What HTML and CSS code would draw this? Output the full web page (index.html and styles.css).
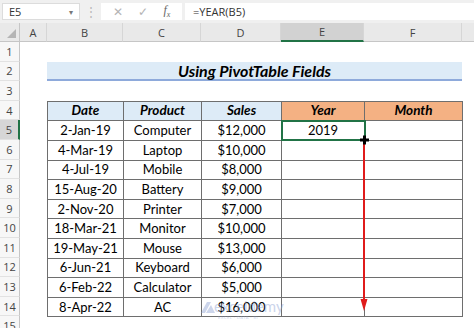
FILE: index.html
```html
<!DOCTYPE html>
<html lang="en">
  <head>
    <meta charset="UTF-8" />
    <title>Using PivotTable Fields</title>
    <link rel="stylesheet" href="styles.css">
  </head>
  <body>
    <div class="topbar">
      <div class="namebox"><span>E5</span><span class="caret">&#9662;</span></div>
      <div class="grip">&#8942;</div>
      <div class="fxbox">
        <span class="cancel">&#10005;</span>
        <span class="enter">&#10003;</span>
        <span class="fx">f<sub>x</sub></span>
      </div>
      <div class="formula">=YEAR(B5)</div>
    </div>

    <div class="sheet">
      <div class="colhead corner"></div>
      <div class="colhead">A</div>
      <div class="colhead">B</div>
      <div class="colhead">C</div>
      <div class="colhead">D</div>
      <div class="colhead active">E</div>
      <div class="colhead">F</div>
      <div class="colhead last"></div>

      <div class="rowhead">1</div>
      <div class="rowhead">2</div>
      <div class="rowhead">3</div>
      <div class="rowhead">4</div>
      <div class="rowhead active">5</div>
      <div class="rowhead">6</div>
      <div class="rowhead">7</div>
      <div class="rowhead">8</div>
      <div class="rowhead">9</div>
      <div class="rowhead">10</div>
      <div class="rowhead">11</div>
      <div class="rowhead">12</div>
      <div class="rowhead">13</div>
      <div class="rowhead">14</div>
      <div class="rowhead">15</div>

      <div class="title">Using PivotTable Fields</div>

      <table class="data">
        <colgroup>
          <col class="c-date"><col class="c-prod"><col class="c-sales"><col class="c-year"><col class="c-month">
        </colgroup>
        <tr>
          <th class="blue">Date</th>
          <th class="blue">Product</th>
          <th class="blue">Sales</th>
          <th class="orange">Year</th>
          <th class="orange">Month</th>
        </tr>
        <tr><td>2-Jan-19</td><td>Computer</td><td>$12,000</td><td class="sel">2019</td><td></td></tr>
        <tr><td>4-Mar-19</td><td>Laptop</td><td>$10,000</td><td></td><td></td></tr>
        <tr><td>4-Jul-19</td><td>Mobile</td><td>$8,000</td><td></td><td></td></tr>
        <tr><td>15-Aug-20</td><td>Battery</td><td>$9,000</td><td></td><td></td></tr>
        <tr><td>2-Nov-20</td><td>Printer</td><td>$7,000</td><td></td><td></td></tr>
        <tr><td>18-Mar-21</td><td>Monitor</td><td>$10,000</td><td></td><td></td></tr>
        <tr><td>19-May-21</td><td>Mouse</td><td>$13,000</td><td></td><td></td></tr>
        <tr><td>6-Jun-21</td><td>Keyboard</td><td>$6,000</td><td></td><td></td></tr>
        <tr><td>6-Feb-22</td><td>Calculator</td><td>$5,000</td><td></td><td></td></tr>
        <tr><td>8-Apr-22</td><td>AC</td><td>$16,000</td><td></td><td></td></tr>
      </table>
    </div>

    <!-- fill handle, drag arrow and watermark sit over the grid -->
    <svg class="marks" width="474" height="328" viewBox="0 0 474 328">
      <g class="logo">
        <polygon points="201,313 207,302 211,302 205,313" />
        <polygon points="206,313 211,305 215,313" />
        <text x="214" y="312" class="wm">exceldemy</text>
        <text x="218" y="319" class="wm-small">EXCEL · DATA · BI</text>
      </g>
      <line x1="364" y1="143" x2="364" y2="301" class="arrow" />
      <polygon points="360.5,299 367.5,299 364,311" class="arrowhead" />
      <rect x="360" y="138.5" width="9" height="3" />
      <rect x="363" y="135.5" width="3" height="9" />
    </svg>
  </body>
</html>
```

FILE: styles.css
```css
* {
  margin: 0;
  padding: 0;
  box-sizing: border-box;
}

body {
  position: relative;
  width: 474px;
  height: 328px;
  overflow: hidden;
  background-color: #fff;
  color: #000;
  font-family: "Lato", "Liberation Sans", sans-serif;
}

/* formula bar */
.topbar {
  display: flex;
  align-items: center;
  height: 23px;
  padding: 3px 0 3px 2px;
  background-color: #f0f0f0;
  font-family: "Open Sans", "Liberation Sans", sans-serif;
  font-size: 11px;
  color: #333;
}

.namebox {
  display: flex;
  justify-content: space-between;
  align-items: center;
  width: 78px;
  height: 17px;
  padding: 0 6px 0 6px;
  background-color: #fff;
  border: 1px solid #dcdcdc;
}

.caret {
  font-size: 8px;
  color: #777;
}

.grip {
  width: 21px;
  text-align: center;
  color: #b8b8b8;
  font-size: 12px;
}

.fxbox {
  display: flex;
  justify-content: space-around;
  align-items: center;
  width: 81px;
  height: 17px;
  padding: 0 4px;
  background-color: #fff;
  color: #b4b4b4;
  font-size: 12px;
}

.fx {
  font-family: "Liberation Serif", serif;
  font-style: italic;
  color: #666;
}

.fx sub {
  font-size: 8px;
}

.formula {
  flex: 1;
  height: 17px;
  margin-left: 3px;
  padding-left: 8px;
  background-color: #fff;
  line-height: 17px;
}

/* worksheet grid */
.sheet {
  display: grid;
  grid-template-columns: 20px 27px 76px 78px 80px 83px 98px 1fr;
  grid-template-rows: 19px repeat(15, 19.6px);
}

.colhead {
  display: flex;
  justify-content: center;
  align-items: center;
  background-color: #e9e9e9;
  border-bottom: 1px solid #c6c6c6;
  border-right: 1px solid #d6d6d6;
  font-family: "Open Sans", "Liberation Sans", sans-serif;
  font-size: 11px;
  color: #444;
}

.colhead.corner {
  position: relative;
  border-right: 1px solid #c6c6c6;
}

.colhead.corner::after {
  content: "";
  position: absolute;
  right: 3px;
  bottom: 3px;
  width: 9px;
  height: 9px;
  background-color: #b5b5b5;
  clip-path: polygon(100% 0, 100% 100%, 0 100%);
}

.colhead.active {
  background-color: #d2d2d2;
  border-bottom: 2px solid #217346;
}

.colhead.last {
  border-right: none;
}

.rowhead {
  grid-column: 1;
  display: flex;
  justify-content: center;
  align-items: center;
  background-color: #f7f7f7;
  border-right: 1px solid #c6c6c6;
  border-bottom: 1px solid #e2e2e2;
  font-family: "Open Sans", "Liberation Sans", sans-serif;
  font-size: 11px;
  color: #444;
}

.rowhead.active {
  background-color: #d6d6d6;
  border-right: 2px solid #217346;
}

.title {
  grid-column: 3 / 8;
  grid-row: 3;
  display: flex;
  justify-content: center;
  align-items: center;
  background-color: #ddebf7;
  border-bottom: 2px solid #8eaadb;
  font-size: 16px;
  font-weight: 700;
  font-style: italic;
}

.data {
  grid-column: 3 / 8;
  grid-row: 5 / 16;
  width: 100%;
  height: 100%;
  border-collapse: collapse;
  table-layout: fixed;
}

.c-date { width: 76px; }
.c-prod { width: 78px; }
.c-sales { width: 80px; }
.c-year { width: 83px; }
.c-month { width: 98px; }

.data th,
.data td {
  height: 19.6px;
  padding: 0;
  border: 1px solid #6e6e6e;
  text-align: center;
  font-size: 13px;
  font-weight: 400;
  line-height: 1;
}

.data th {
  font-size: 13.5px;
  font-weight: 700;
  font-style: italic;
}

.data th.blue {
  background-color: #ddebf7;
}

.data th.orange {
  background-color: #f4b183;
}

.data td.sel {
  outline: 2px solid #217346;
  outline-offset: -1px;
}

/* overlay */
.marks {
  position: absolute;
  left: 0;
  top: 0;
  pointer-events: none;
}

.logo {
  fill: #8fa3d4;
  opacity: 0.45;
}

.wm {
  font-family: "Lato", sans-serif;
  font-size: 15px;
}

.wm-small {
  font-family: "Lato", sans-serif;
  font-size: 4px;
  letter-spacing: 0.5px;
}

.arrow {
  stroke: #e01b1b;
  stroke-width: 2;
}

.arrowhead {
  fill: #e01b1b;
}
```
